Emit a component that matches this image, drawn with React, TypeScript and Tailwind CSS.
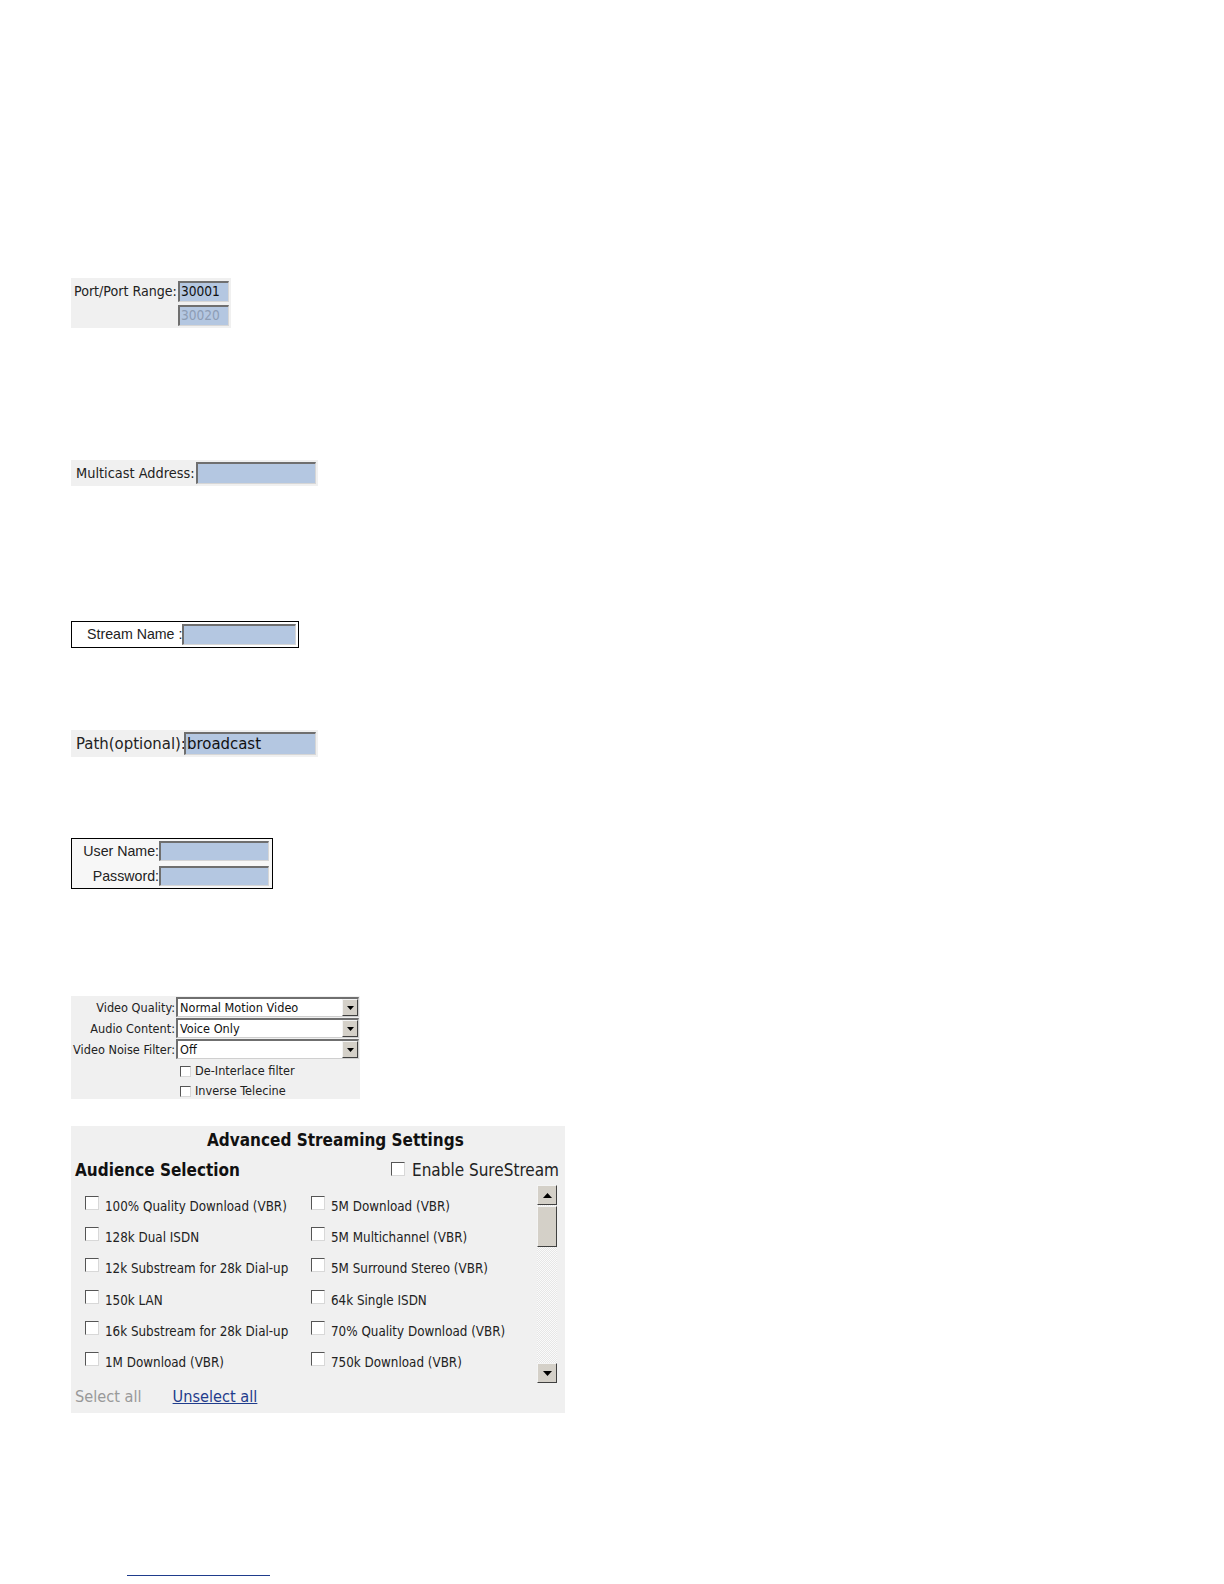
import React from "react";

const tahoma = "font-['DejaVu_Sans_Condensed','Noto_Sans',sans-serif]";
const arial = "font-['Liberation_Sans',Arial,sans-serif]";

const inputCls =
  "bg-[#b4c7e1] border-t-2 border-l-2 border-b border-r border-t-[#6f6f6f] border-l-[#6f6f6f] border-b-[#d6d6d6] border-r-[#d6d6d6] box-border";

function Check({ size = 13 }: { size?: number }) {
  return (
    <span
      className="inline-block shrink-0 bg-white border border-t-[#555] border-l-[#555] border-b-[#d8d8d8] border-r-[#d8d8d8] box-border"
      style={{ width: size, height: size }}
    />
  );
}

function Select({ value }: { value: string }) {
  return (
    <div className="flex w-[183px] h-[20px] bg-white border-t-2 border-l-2 border-b border-r border-t-[#6f6f6f] border-l-[#6f6f6f] border-b-[#cfcfcf] border-r-[#cfcfcf] box-border">
      <div className="flex-1 pl-[2px] leading-[17px] text-[12.6px] text-[#111] whitespace-nowrap">{value}</div>
      <div className="w-[16px] h-[17px] bg-[#d4d0c8] border border-t-[#f4f4f4] border-l-[#f4f4f4] border-b-[#404040] border-r-[#404040] flex items-center justify-center box-border">
        <svg width="7" height="4" viewBox="0 0 7 4">
          <polygon points="0,0 7,0 3.5,4" fill="#000" />
        </svg>
      </div>
    </div>
  );
}

const audience: [string, string][] = [
  ["100% Quality Download (VBR)", "5M Download (VBR)"],
  ["128k Dual ISDN", "5M Multichannel (VBR)"],
  ["12k Substream for 28k Dial-up", "5M Surround Stereo (VBR)"],
  ["150k LAN", "64k Single ISDN"],
  ["16k Substream for 28k Dial-up", "70% Quality Download (VBR)"],
  ["1M Download (VBR)", "750k Download (VBR)"],
];

function ScrollBtn({ up }: { up: boolean }) {
  return (
    <div className="w-[20px] h-[20px] bg-[#d4d0c8] border border-t-[#f4f4f4] border-l-[#f4f4f4] border-b-[#404040] border-r-[#404040] flex items-center justify-center box-border shrink-0">
      <svg width="9" height="5" viewBox="0 0 9 5">
        {up ? (
          <polygon points="0,5 9,5 4.5,0" fill="#000" />
        ) : (
          <polygon points="0,0 9,0 4.5,5" fill="#000" />
        )}
      </svg>
    </div>
  );
}

export default function App() {
  return (
    <div className={`h-[1584px] overflow-hidden bg-white pl-[71px] pt-[278px] flex flex-col items-start text-[#222] ${tahoma}`}>
      {/* Port range */}
      <div className="w-[160px] h-[50px] bg-[#f0f0f0] flex shrink-0">
        <div className="w-[107px] pl-[3px] pt-[5px] text-[14.1px] leading-[17px] text-[#222] whitespace-nowrap">Port/Port Range:</div>
        <div className="flex flex-col gap-[3px] pt-[3px]">
          <div className={`${inputCls} w-[51px] h-[21px] text-[13.6px] leading-[17px] pl-[1px] text-[#111]`}>30001</div>
          <div className={`${inputCls} w-[51px] h-[21px] text-[13.6px] leading-[17px] pl-[1px] text-[#8d9db5]`}>30020</div>
        </div>
      </div>

      {/* Multicast */}
      <div className="mt-[132px] w-[247px] h-[26px] bg-[#f0f0f0] flex items-center shrink-0">
        <div className="w-[125px] pl-[5px] text-[14.4px] leading-[17px] whitespace-nowrap">Multicast Address:</div>
        <div className={`${inputCls} w-[120px] h-[22px]`} />
      </div>

      {/* Stream name */}
      <div className={`mt-[135px] w-[228px] h-[27px] bg-white border border-black flex items-center shrink-0 ${arial}`}>
        <div className="w-[110px] pl-[15px] text-[14.2px] leading-[17px] text-[#222] whitespace-nowrap">Stream Name :</div>
        <div className={`${inputCls} w-[114px] h-[21px]`} />
      </div>

      {/* Path */}
      <div className="mt-[82px] w-[247px] h-[27px] bg-[#f0f0f0] flex items-center shrink-0">
        <div className="w-[113px] pl-[5px] text-[16.6px] leading-[20px] whitespace-nowrap">Path(optional):</div>
        <div className={`${inputCls} w-[132px] h-[23px] text-[16.6px] leading-[19px] pl-[1px] text-[#111]`}>broadcast</div>
      </div>

      {/* User / password */}
      <div className={`mt-[81px] w-[202px] h-[51px] bg-[#f7f7f7] border border-black flex flex-col justify-center gap-[5px] shrink-0 ${arial}`}>
        <div className="flex items-center">
          <div className="w-[87px] text-right text-[14.2px] leading-[17px]">User Name:</div>
          <div className={`${inputCls} w-[110px] h-[20px]`} />
        </div>
        <div className="flex items-center">
          <div className="w-[87px] text-right text-[14.2px] leading-[17px]">Password:</div>
          <div className={`${inputCls} w-[110px] h-[20px]`} />
        </div>
      </div>

      {/* Video settings */}
      <div className="mt-[107px] w-[289px] h-[103px] bg-[#f0f0f0] flex flex-col pt-[1px] text-[12.6px] shrink-0">
        {[
          ["Video Quality:", "Normal Motion Video"],
          ["Audio Content:", "Voice Only"],
          ["Video Noise Filter:", "Off"],
        ].map(([l, v], i) => (
          <div key={l} className={`flex items-center ${i > 0 ? "mt-[1px]" : ""}`}>
            <div className="w-[105px] text-right leading-[15px] pr-[1px] whitespace-nowrap">{l}</div>
            <Select value={v} />
          </div>
        ))}
        <div className="flex items-center gap-[4px] pl-[109px] mt-[5px]">
          <Check size={11} />
          <span className="leading-[14px]">De-Interlace filter</span>
        </div>
        <div className="flex items-center gap-[4px] pl-[109px] mt-[6px]">
          <Check size={11} />
          <span className="leading-[14px]">Inverse Telecine</span>
        </div>
      </div>

      {/* Advanced */}
      <div className="mt-[27px] w-[494px] h-[287px] bg-[#f0f0f0] flex flex-col shrink-0">
        <div className="pl-[136px] pt-[4px] text-[17px] leading-[21px] font-bold text-[#111] whitespace-nowrap">Advanced Streaming Settings</div>
        <div className="flex items-start justify-between pl-[4px] pr-[6px] mt-[9px]">
          <div className="text-[17px] leading-[21px] font-bold text-[#111]">Audience Selection</div>
          <div className="flex items-start gap-[7px]">
            <span className="-mt-[1px]"><Check size={14} /></span>
            <span className="text-[17px] leading-[20px] whitespace-nowrap">Enable SureStream</span>
          </div>
        </div>
        <div className="flex mt-[2px] h-[198px]">
          <div className="w-[466px] flex flex-col pt-[11px]">
            {audience.map(([a, b]) => (
              <div key={a} className="flex h-[32px] text-[13.3px] whitespace-nowrap">
                <div className="w-[240px] pl-[14px] flex items-start gap-[6px]">
                  <Check size={14} />
                  <span className="leading-[16px] mt-[3px]">{a}</span>
                </div>
                <div className="flex items-start gap-[6px]">
                  <Check size={14} />
                  <span className="leading-[16px] mt-[3px]">{b}</span>
                </div>
              </div>
            ))}
          </div>
          <div className="w-[20px] h-[198px] flex flex-col bg-[repeating-conic-gradient(#e6e6e6_0_25%,#fafafa_0_50%)] bg-[length:2px_2px]">
            <ScrollBtn up />
            <div className="w-[20px] h-[41px] mt-[1px] bg-[#d4d0c8] border border-t-[#f4f4f4] border-l-[#f4f4f4] border-b-[#404040] border-r-[#404040] box-border" />
            <div className="flex-1" />
            <ScrollBtn up={false} />
          </div>
        </div>
        <div className="flex gap-[31px] pl-[4px] mt-[4px] text-[16.2px] leading-[20px]">
          <span className="text-[#999]">Select all</span>
          <span className="text-[#1f3c8c] underline">Unselect all</span>
        </div>
      </div>

      {/* bottom rule */}
      <div className="mt-[162px] ml-[56px] w-[143px] h-[1px] bg-[#1f3c8c] shrink-0" />
    </div>
  );
}
